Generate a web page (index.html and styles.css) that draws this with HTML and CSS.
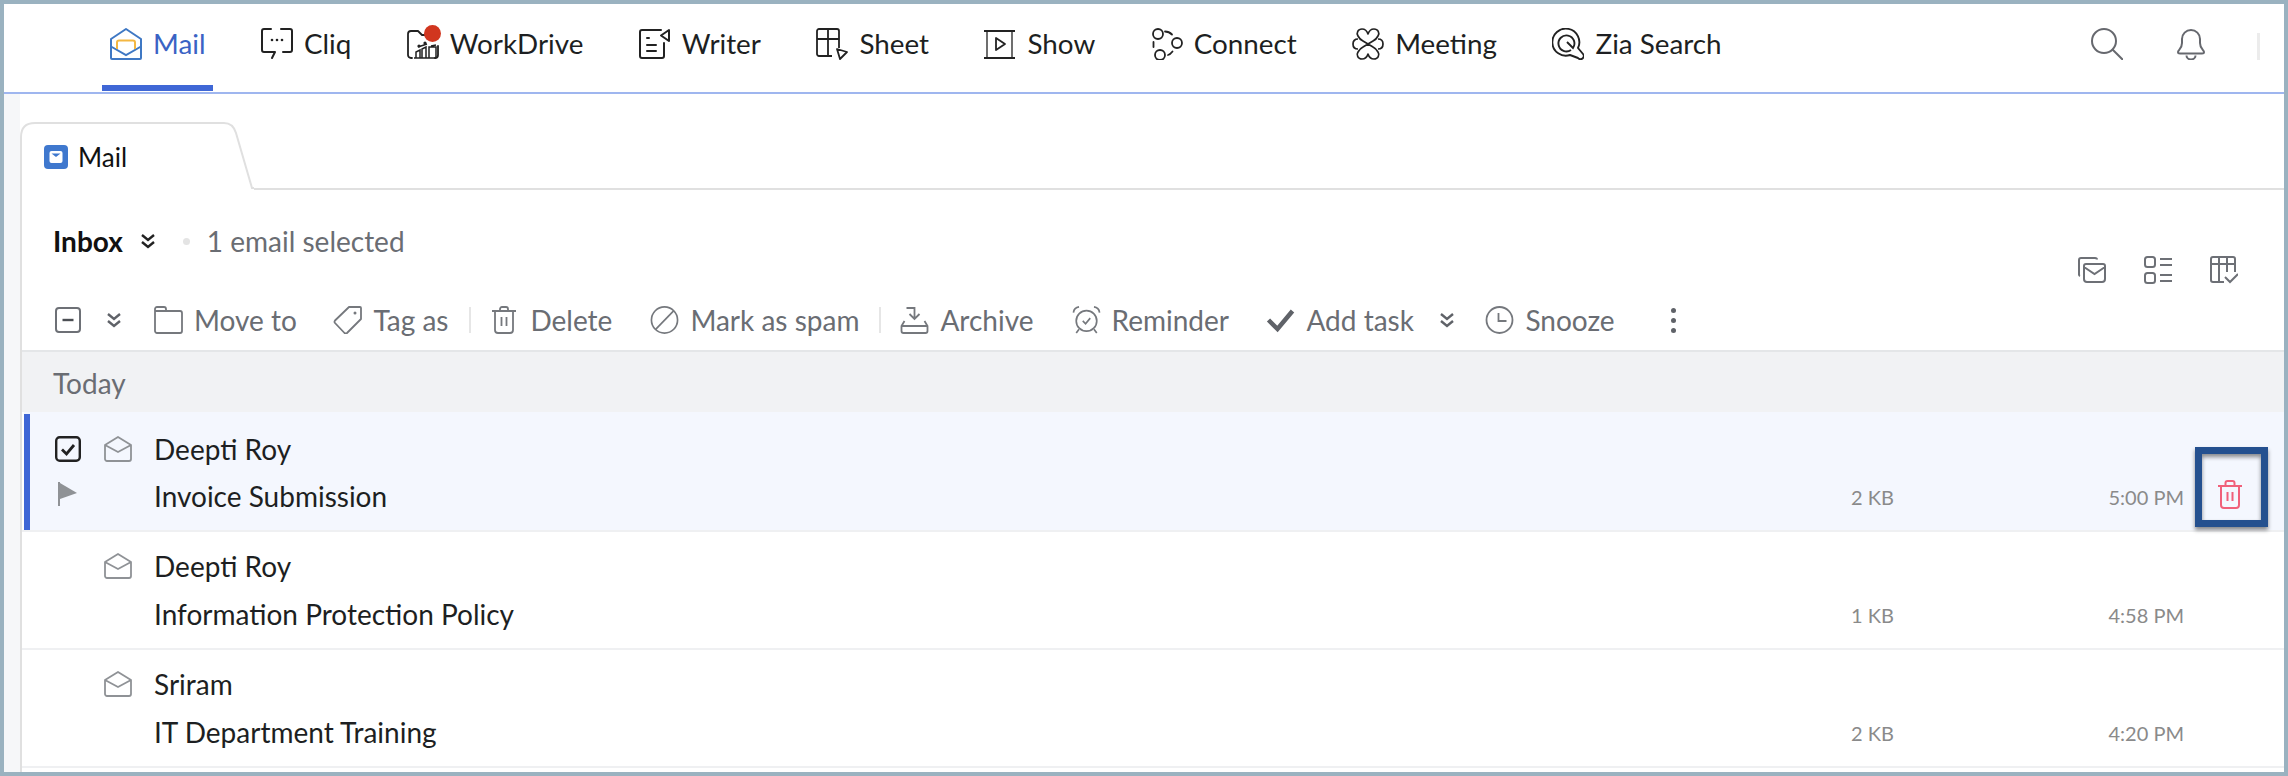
FILE: index.html
```html
<!DOCTYPE html>
<html lang="en">
<head>
<meta charset="utf-8">
<title>Mail</title>
<link rel="stylesheet" href="styles.css">
</head>
<body>
<svg class="defs" width="0" height="0" aria-hidden="true">
  <symbol id="chev" viewBox="0 0 16 16"><path d="M2 2 8 7l6-5M2 9l6 5 6-5" fill="none" stroke="currentColor" stroke-width="2.400"/></symbol>
  <symbol id="envelope" viewBox="0 0 28 26"><path d="M1 9 14 1l13 8v14a2 2 0 0 1-2 2H3a2 2 0 0 1-2-2Z M1 9l13 7 13-7" fill="none" stroke="#8f9296" stroke-width="1.800" stroke-linejoin="round"/></symbol>
</svg>
<div class="frame">
  <header class="nav">
    <div class="nav-apps">
      <a class="app active">
        <svg class="app-icon" viewBox="0 0 32 32"><path d="M1 11 16 1l15 10v19a1 1 0 0 1-1 1H2a1 1 0 0 1-1-1Z" fill="none" stroke="#3f78c4" stroke-width="2" stroke-linejoin="round"/><path d="M1 18.500 16 27l15-8.500" fill="none" stroke="#3f78c4" stroke-width="2"/><path d="M7 21v-6.500a2 2 0 0 1 2-2h14a2 2 0 0 1 2 2V21" fill="none" stroke="#f4b742" stroke-width="2"/></svg>
        <span>Mail</span>
      </a>
      <a class="app">
        <svg class="app-icon" viewBox="0 0 32 32"><path d="M10 1H3a2 2 0 0 0-2 2v19a2 2 0 0 0 2 2h11l-3 6M22 24h7a2 2 0 0 0 2-2V3a2 2 0 0 0-2-2h-9" fill="none" stroke="#222" stroke-width="2" stroke-linecap="round" stroke-linejoin="round"/><circle cx="11" cy="12" r="1.300" fill="#222"/><circle cx="16" cy="12" r="1.300" fill="#222"/><circle cx="21" cy="12" r="1.300" fill="#222"/></svg>
        <span>Cliq</span>
      </a>
      <a class="app">
        <span class="app-badged">
          <svg class="app-icon" viewBox="0 0 32 32"><path d="M5 30H4a3 3 0 0 1-3-3V6a3 3 0 0 1 3-3h7l4 4h6M31 18v9a3 3 0 0 1-3 3" fill="none" stroke="#222" stroke-width="1.800" stroke-linecap="round" stroke-linejoin="round"/><path d="M9 30v-6l4-2v8M15 30v-9l4-2v11M22 30V19h7v11M7 30h22M11 19l9-3M24 18l5-1" fill="none" stroke="#222" stroke-width="1.500"/><circle cx="12" cy="18" r="1.600" fill="#222"/><circle cx="18" cy="15" r="1.600" fill="#222"/></svg>
          <i class="red-dot"></i>
        </span>
        <span>WorkDrive</span>
      </a>
      <a class="app">
        <svg class="app-icon" viewBox="0 0 32 32"><path d="M22 2H3a2 2 0 0 0-2 2v24a2 2 0 0 0 2 2h20a2 2 0 0 0 2-2V15M8 10h2M8 17h9M8 23h9" fill="none" stroke="#222" stroke-width="2" stroke-linecap="round"/><path d="M30 2v11l-8-5.500Z" fill="none" stroke="#222" stroke-width="2" stroke-linejoin="round"/></svg>
        <span>Writer</span>
      </a>
      <a class="app">
        <svg class="app-icon" viewBox="0 0 32 32"><path d="M16 28H3a2 2 0 0 1-2-2V3a2 2 0 0 1 2-2h18a2 2 0 0 1 2 2v17M1 11h22M12 1v27" fill="none" stroke="#222" stroke-width="1.800"/><path d="M21 21l10 3-7 7Z" fill="none" stroke="#222" stroke-width="1.800" stroke-linejoin="round"/></svg>
        <span>Sheet</span>
      </a>
      <a class="app">
        <svg class="app-icon" viewBox="0 0 32 32"><path d="M0 3h31M0 30h31" stroke="#222" stroke-width="2"/><path d="M3 3v27M28 3v27" stroke="#222" stroke-width="1.300"/><path d="M12 10v12l9-6Z" fill="none" stroke="#222" stroke-width="1.800" stroke-linejoin="round"/></svg>
        <span>Show</span>
      </a>
      <a class="app">
        <svg class="app-icon" viewBox="0 0 32 32"><circle cx="7" cy="6" r="5" fill="none" stroke="#222" stroke-width="1.800"/><circle cx="26" cy="15" r="5" fill="none" stroke="#222" stroke-width="1.800"/><circle cx="9" cy="27" r="5" fill="none" stroke="#222" stroke-width="1.800"/><path d="M14 3.500c3 0 5 1 7 3M2.500 14v5M17 27c2-.5 3-1.500 4.500-3.500" fill="none" stroke="#222" stroke-width="1.800" stroke-linecap="round"/></svg>
        <span>Connect</span>
      </a>
      <a class="app">
        <svg class="app-icon" viewBox="0 0 32 32"><path d="M16 6c1-3 3-5 6-5 4 0 6 4 4 7-1 2-3 4-5 5l-5 3 5 3c2 1 4 3 5 5 2 3 0 7-4 7-3 0-5-2-6-5-1 3-3 5-6 5-4 0-6-4-4-7 1-2 3-4 5-5l5-3-5-3C9 12 7 10 6 8 4 5 6 1 10 1c3 0 5 2 6 5Z" fill="none" stroke="#222" stroke-width="1.700" stroke-linejoin="round"/><path d="M6 11c-3 0-5 2-5 5s2 5 5 5M26 11c3 0 5 2 5 5s-2 5-5 5" fill="none" stroke="#222" stroke-width="1.700"/></svg>
        <span>Meeting</span>
      </a>
      <a class="app">
        <svg class="app-icon" viewBox="0 0 32 32"><path d="M18 27a13.500 13.500 0 1 1 8-7l5 6a3 3 0 0 1-5 4Z" fill="none" stroke="#222" stroke-width="1.900" stroke-linejoin="round"/><path d="M19 22a8 8 0 1 1 2-2l-6-6" fill="none" stroke="#222" stroke-width="1.900"/></svg>
        <span>Zia Search</span>
      </a>
    </div>
    <div class="nav-tools">
      <svg class="tool-search" viewBox="0 0 32 32"><circle cx="13" cy="13" r="12" fill="none" stroke="#66686e" stroke-width="2"/><path d="M21.500 21.500 32 32" stroke="#66686e" stroke-width="2"/></svg>
      <svg class="tool-bell" viewBox="0 0 28 32"><path d="M1 24c0-2 4-3 4-9V11a9 9 0 0 1 18 0v4c0 6 4 7 4 9 0 1-1 1.500-2 1.500H3c-1 0-2-.5-2-1.500ZM9.500 27.500a4.500 4 0 0 0 9 0" fill="none" stroke="#66686e" stroke-width="2"/></svg>
      <i class="tool-divider"></i>
    </div>
  </header>

  <div class="workspace">
    <div class="strip"></div>
    <main class="main">
      <div class="tabbar">
        <div class="tab">
          <svg class="tab-shape" viewBox="0 0 234 68" preserveAspectRatio="none"><path d="M1 68V15Q1 1 15 1H204Q213 1 216 11L232 66H234" fill="#fff" stroke="#e0e0e0" stroke-width="2"/></svg>
          <svg class="tab-icon" viewBox="0 0 24 24"><rect width="24" height="24" rx="4" fill="#3f78ce"/><rect x="5.500" y="6" width="13" height="12" rx="2" fill="#fff"/><path d="M7.500 8.500h9L12 12Z" fill="#3f78ce"/></svg>
          <span class="tab-label">Mail</span>
        </div>
        <div class="tab-rest"></div>
      </div>
      <section class="panel">
        <div class="head">
          <div class="title">
            <b class="folder">Inbox</b>
            <svg class="chev chev-dark"><use href="#chev"/></svg>
            <i class="dot"></i>
            <span class="count">1 email selected</span>
          </div>
          <div class="views">
            <svg class="view" viewBox="0 0 28 26"><path d="M2 19a1.500 1.500 0 0 1-1-1.500V3a2 2 0 0 1 2-2h14c1 0 2 .5 2 1.500M6 9a2 2 0 0 1 2-2h17a2 2 0 0 1 2 2v13a3 3 0 0 1-3 3H9a3 3 0 0 1-3-3ZM6 10l10.500 7L27 10" fill="none" stroke="#6d7076" stroke-width="2"/></svg>
            <svg class="view" viewBox="0 0 28 28"><rect x="1" y="1" width="10" height="10" rx="2.500" fill="none" stroke="#6d7076" stroke-width="2"/><rect x="1" y="17" width="10" height="10" rx="2.500" fill="none" stroke="#6d7076" stroke-width="2"/><path d="M16 3h12M16 9h12M16 19h12M16 25h12" stroke="#6d7076" stroke-width="2"/></svg>
            <svg class="view" viewBox="0 0 28 28"><path d="M14 26H3a2 2 0 0 1-2-2V3a2 2 0 0 1 2-2h20a2 2 0 0 1 2 2v13M1 8h24M9 1v25M17 1v15" fill="none" stroke="#6d7076" stroke-width="2"/><path d="M15 21l5 5 8-8" fill="none" stroke="#6d7076" stroke-width="2"/></svg>
          </div>
        </div>
        <div class="actions">
          <svg class="act-box" viewBox="0 0 26 26"><rect x="1" y="1" width="24" height="24" rx="3" fill="none" stroke="#6d7076" stroke-width="2"/><path d="M7.500 13h11" stroke="#4c4f54" stroke-width="2.400"/></svg>
          <svg class="chev chev-menu"><use href="#chev"/></svg>
          <span class="act act-move">
            <svg class="act-i" viewBox="0 0 29 28"><path d="M1 25V3a2 2 0 0 1 2-2h7a2 2 0 0 1 2 2v2h14a2 2 0 0 1 2 2v18a2 2 0 0 1-2 2H3a2 2 0 0 1-2-2ZM12 5H1" fill="none" stroke="#75787d" stroke-width="1.800"/></svg>
            Move to
          </span>
          <span class="act act-tag">
            <svg class="act-i" viewBox="0 0 29 28"><path d="M16 1h11a1 1 0 0 1 1 1v11L14 27a2 2 0 0 1-2.500 0L2 17a2 2 0 0 1 0-2.500Z" fill="none" stroke="#75787d" stroke-width="1.800" stroke-linejoin="round"/><circle cx="22" cy="7" r="1.500" fill="#75787d"/></svg>
            Tag as
          </span>
          <i class="act-sep sep-tag"></i>
          <span class="act act-del">
            <svg class="act-i trash" viewBox="0 0 24 28"><path d="M0 5h24M8 5V3a2 2 0 0 1 2-2h4a2 2 0 0 1 2 2v2M3 5v19a3 3 0 0 0 3 3h12a3 3 0 0 0 3-3V5M9.500 11v9M14.500 11v9" fill="none" stroke="#75787d" stroke-width="1.800"/></svg>
            Delete
          </span>
          <span class="act">
            <svg class="act-i" viewBox="0 0 30 30"><circle cx="15" cy="15" r="14" fill="none" stroke="#75787d" stroke-width="1.800"/><path d="M5.500 25 25 5" stroke="#75787d" stroke-width="1.800"/></svg>
            Mark as spam
          </span>
          <i class="act-sep sep-spam"></i>
          <span class="act act-archive">
            <svg class="act-i" viewBox="0 0 28 28"><path d="M4 15 1 20v5a2 2 0 0 0 2 2h22a2 2 0 0 0 2-2v-5l-3-5M1 20h26M6 2h8v11M9 8l5 5 5-5" fill="none" stroke="#75787d" stroke-width="1.800"/></svg>
            Archive
          </span>
          <span class="act">
            <svg class="act-i" viewBox="0 0 30 30"><circle cx="15" cy="16" r="11" fill="none" stroke="#75787d" stroke-width="1.800"/><path d="M1 7a7 7 0 0 1 6-6M29 7a7 7 0 0 0-6-6M7 25l-3 4M23 25l3 4M11 16l3 3 5-6" fill="none" stroke="#75787d" stroke-width="1.800"/></svg>
            Reminder
          </span>
          <span class="act act-task">
            <svg class="act-i" viewBox="0 0 28 28"><path d="M2 14l9 9L26 5" fill="none" stroke="#5f6268" stroke-width="4.500"/></svg>
            Add task
          </span>
          <svg class="chev chev-task"><use href="#chev"/></svg>
          <span class="act act-snooze">
            <svg class="act-i" viewBox="0 0 28 28"><circle cx="14" cy="14" r="13" fill="none" stroke="#75787d" stroke-width="1.800"/><path d="M13 7v8h8" fill="none" stroke="#75787d" stroke-width="1.800"/></svg>
            Snooze
          </span>
          <span class="more"><i></i><i></i><i></i></span>
        </div>
        <div class="day">Today</div>
        <div class="list">
          <article class="row selected">
            <i class="mark"></i>
            <span class="cell-check">
              <svg class="check" viewBox="0 0 26 26"><rect x="1.200" y="1.200" width="23.600" height="23.600" rx="3.500" fill="none" stroke="#222" stroke-width="2.400"/><path d="M7 13.500l4.500 4.500L19 9" fill="none" stroke="#222" stroke-width="2.800"/></svg>
            </span>
            <span class="cell-mail"><svg class="mail"><use href="#envelope"/></svg></span>
            <span class="from">Deepti Roy</span>
            <span class="cell-flag"><svg class="flag" viewBox="0 0 20 24"><path d="M1 0v24" stroke="#8f9296" stroke-width="2"/><path d="M2 1l17 10L2 17Z" fill="#8f9296"/></svg></span>
            <span class="subject">Invoice Submission</span>
            <span class="size">2 KB</span>
            <span class="time">5:00 PM</span>
            <span class="cell-del"><svg class="del" viewBox="0 0 24 29"><path d="M0 6h24M7.500 6V3a2 2 0 0 1 2-2h5a2 2 0 0 1 2 2v3M3 6v19a3 3 0 0 0 3 3h12a3 3 0 0 0 3-3V6M9.500 12v9M14.500 12v9" fill="none" stroke="#f0607a" stroke-width="2"/></svg></span>
            <i class="callout"></i>
          </article>
          <article class="row">
            <span class="cell-mail"><svg class="mail"><use href="#envelope"/></svg></span>
            <span class="from">Deepti Roy</span>
            <span class="subject">Information Protection Policy</span>
            <span class="size">1 KB</span>
            <span class="time">4:58 PM</span>
          </article>
          <article class="row">
            <span class="cell-mail"><svg class="mail"><use href="#envelope"/></svg></span>
            <span class="from">Sriram</span>
            <span class="subject">IT Department Training</span>
            <span class="size">2 KB</span>
            <span class="time">4:20 PM</span>
          </article>
        </div>
      </section>
    </main>
  </div>
</div>
</body>
</html>
```

FILE: styles.css
```css
* { box-sizing: border-box; }
html, body { margin: 0; height: 100%; overflow: hidden; }
body { background: #9ab2c0; font-family: "Lato", "Noto Sans", sans-serif; color: #1d1f22; }
i { font-style: normal; display: block; }
.defs { position: absolute; }
.frame {
  width: 2288px; height: 776px;
  border: 4px solid #9ab2c0;
  background: #fff;
  display: flex; flex-direction: column;
}

/* top navigation */
.nav {
  height: 90px; flex: none;
  border-bottom: 2px solid #9fb6ef;
  display: flex; justify-content: space-between;
  padding-left: 98px;
}
.nav-apps { display: flex; gap: 39.500px; }
.app {
  height: 87px; padding: 0 8px 2px;
  display: flex; align-items: center; gap: 11px;
  font-size: 27.800px; color: #1d1f22;
  border-bottom: 6px solid transparent;
}
.app.active { color: #3a63c4; border-bottom-color: #3f67d6; }
.app-icon { width: 32px; height: 32px; flex: none; display: block; }
.app-badged { position: relative; display: block; }
.red-dot {
  position: absolute; top: -3px; right: -2px;
  width: 17px; height: 17px; border-radius: 50%; background: #d1361f;
}
.nav-tools { display: flex; align-items: flex-start; padding-top: 24px; padding-right: 24px; }
.tool-search { width: 32px; height: 32px; margin-right: 54px; }
.tool-bell { width: 28px; height: 32px; margin-right: 52px; }
.tool-divider { width: 3px; height: 27px; margin-top: 5px; background: #ececec; }

/* workspace */
.workspace { flex: 1; display: flex; min-height: 0; }
.strip { width: 16px; flex: none; background: #f6f7f9; }
.main { flex: 1; display: flex; flex-direction: column; min-width: 0; }

.tabbar { height: 96px; flex: none; display: flex; align-items: flex-end; }
.tab {
  position: relative; width: 234px; height: 68px; flex: none;
  display: flex; align-items: center; gap: 10px;
  padding: 1px 0 0 24px;
}
.tab-shape { position: absolute; inset: 0; width: 100%; height: 100%; }
.tab-icon { position: relative; width: 24px; height: 24px; }
.tab-label { position: relative; font-size: 26px; color: #111; }
.tab-rest { flex: 1; border-bottom: 2px solid #e0e0e0; }

.panel { flex: 1; min-height: 0; border-left: 2px solid #e0e0e0; display: flex; flex-direction: column; }
.head { height: 104px; flex: none; display: flex; justify-content: space-between; padding: 0 46px 0 31px; }
.title { height: 36px; margin-top: 33px; display: flex; align-items: center; }
.folder { font-size: 28px; font-weight: 700; color: #111; }
.chev { display: block; width: 16px; height: 16px; flex: none; }
.chev-dark { color: #222; margin-left: 17px; }
.dot { width: 7px; height: 7px; border-radius: 50%; background: #e4e4e4; margin-left: 27px; }
.count { font-size: 28px; color: #6a6d73; margin-left: 17px; }
.views { display: flex; gap: 38px; margin-top: 66px; height: 28px; }
.view { width: 28px; height: 28px; display: block; }

.actions {
  height: 58px; flex: none;
  border-bottom: 2px solid #e4e6e8;
  padding: 0 0 4px 33px;
  display: flex; align-items: center;
  color: #6a6d73; font-size: 28px;
}
.act-box { width: 26px; height: 26px; flex: none; }
.chev-menu { color: #5f6268; margin-left: 25px; }
.act { display: flex; align-items: center; gap: 11px; margin-left: 38px; white-space: nowrap; }
.act-i { width: 29px; height: 28px; flex: none; }
.act .trash { width: 24px; }
.act-move { margin-left: 32px; }
.act-tag { margin-left: 36.500px; }
.act-del { margin-left: 0; gap: 14px; }
.act-archive { margin-left: 0; }
.act-task { margin-left: 37.500px; }
.act-sep { width: 2px; height: 26px; background: #e6e6e6; }
.sep-tag { margin: 0 21px; }
.sep-spam { margin: 0 19px 0 20px; }
.chev-task { color: #5f6268; margin-left: 25px; }
.act-snooze { margin-left: 30.500px; }
.more { margin-left: 56px; display: flex; flex-direction: column; gap: 5px; }
.more i { width: 5px; height: 5px; border-radius: 50%; background: #5f6268; }

.day {
  height: 60px; flex: none;
  background: #f1f2f4; color: #6a6d73;
  font-size: 28px; padding: 2px 0 0 31px;
  display: flex; align-items: center;
}

/* message rows */
.list { flex: 1; min-height: 0; }
.row {
  position: relative;
  height: 118px;
  border-bottom: 2px solid #eff0f2;
  padding-left: 2px;
  display: grid;
  grid-template-columns: 6px 74px 50px 1fr 60px 290px 34px 24px 42px;
  grid-template-rows: 10px 48px 48px 10px;
}
.row.selected {
  height: 120px;
  grid-template-rows: 13px 47px 48px 10px;
  background: linear-gradient(#f4f7fe, #f4f7fe) 2px 0 no-repeat;
}
.mark { grid-column: 1; grid-row: 1 / 5; margin-top: 2px; background: #3f67d6; }
.cell-check { grid-column: 2; grid-row: 2; padding-left: 25px; display: flex; align-items: center; }
.check { width: 26px; height: 26px; }
.cell-mail { grid-column: 3; grid-row: 2; display: flex; align-items: center; }
.mail { width: 28px; height: 26px; display: block; }
.from { grid-column: 4; grid-row: 2; font-size: 28px; align-self: center; white-space: nowrap; }
.cell-flag { grid-column: 2; grid-row: 3; padding-left: 28px; display: flex; align-items: center; }
.flag { width: 20px; height: 24px; margin-top: -4px; }
.subject { grid-column: 4; grid-row: 3; font-size: 28px; align-self: center; white-space: nowrap; }
.size, .time { grid-row: 3; font-size: 20px; color: #8a8a8a; text-align: right; align-self: center; white-space: nowrap; padding-top: 2px; }
.size { grid-column: 5; }
.time { grid-column: 6; }
.cell-del { grid-column: 8; grid-row: 3; display: flex; align-items: center; }
.del { width: 24px; height: 29px; display: block; margin-top: -3px; }
.callout {
  position: absolute; left: 2173px; top: 35px;
  width: 73px; height: 80px;
  border: 7px solid #24508f;
  box-shadow: 0 3px 4px rgba(0,0,0,.45), inset 0 3px 4px rgba(0,0,0,.45);
}
```
